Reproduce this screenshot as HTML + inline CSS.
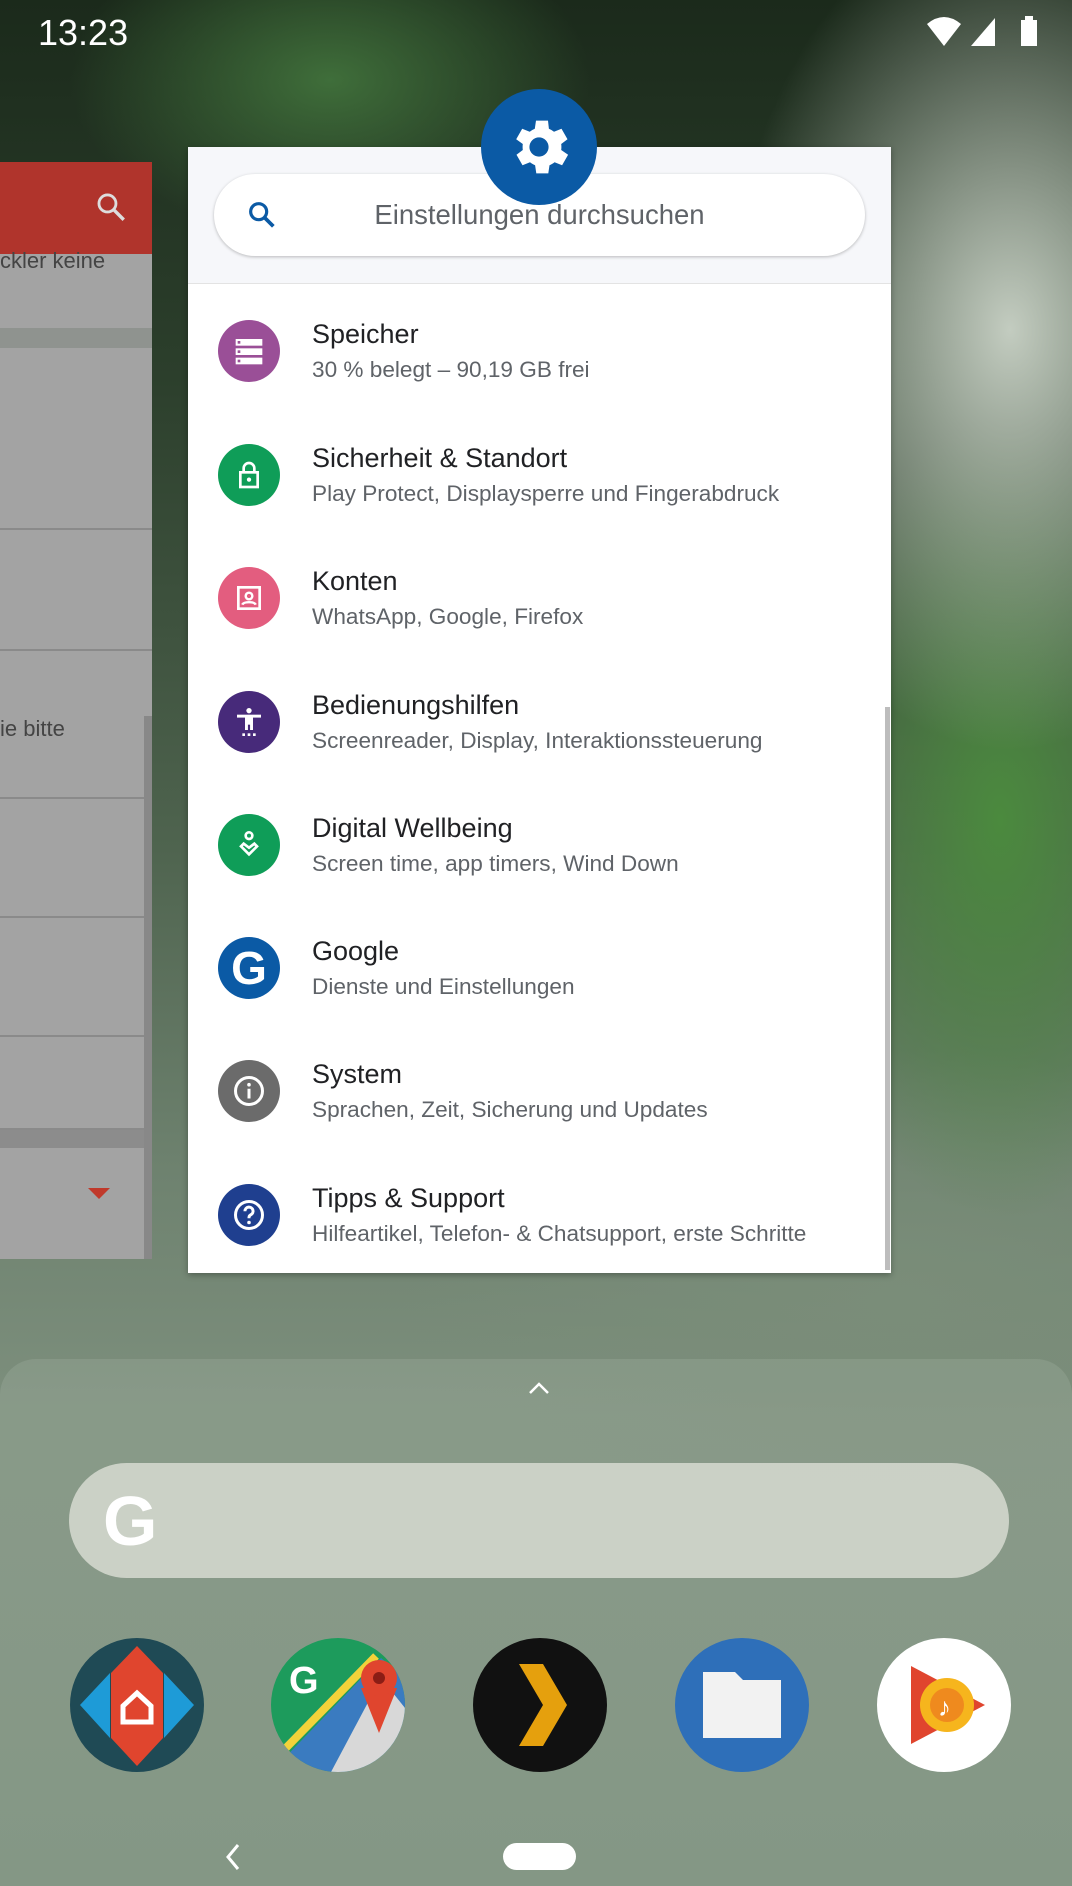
<!DOCTYPE html>
<html><head><meta charset="utf-8"><style>
*{margin:0;padding:0;box-sizing:border-box}
body{width:1072px;height:1886px;overflow:hidden;position:relative;font-family:"Liberation Sans",sans-serif;
background:
radial-gradient(ellipse 260px 160px at 330px 80px,#3f6e3a 0%,rgba(60,100,55,0) 100%),
radial-gradient(ellipse 280px 420px at 1010px 330px,#c3ccc0 0%,rgba(180,190,178,0) 100%),
radial-gradient(ellipse 200px 400px at 1000px 820px,#4b8a3e 0%,rgba(70,130,60,0) 100%),
radial-gradient(ellipse 500px 250px at 900px 1300px,#7a8d79 0%,rgba(120,140,120,0) 100%),
linear-gradient(180deg,#1b2a1b 0%,#2c3f2c 20%,#4f644f 45%,#6e826f 62%,#7d8f7d 75%,#788c79 100%);}
.abs{position:absolute}
.time{left:38px;top:12px;color:#fff;font-size:36px}
.left{left:0;top:162px;width:152px;height:1097px;background:#a3a3a3}
.lhead{left:0;top:162px;width:152px;height:92px;background:#b0342c}
.line{left:0;width:152px;height:2px;background:#8a8a8a}
.card{left:188px;top:147px;width:703px;height:1126px;background:#fff;box-shadow:0 2px 6px rgba(0,0,0,.3)}
.chead{left:188px;top:147px;width:703px;height:137px;background:#f6f7fa;border-bottom:1px solid #e3e3e3}
.pill{left:214px;top:174px;width:651px;height:82px;border-radius:41px;background:#fff;box-shadow:0 1px 3px rgba(0,0,0,.25)}
.ph{left:214px;top:199px;width:651px;text-align:center;font-size:27.5px;color:#5f6368}
.gear{left:481px;top:89px;width:116px;height:116px;border-radius:50%;background:#0b5aa5}
.ic{width:62px;height:62px;border-radius:50%;left:218px}
.t{left:312px;font-size:27px;color:#202124}
.s{left:312px;font-size:22.6px;color:#5f6368}
.dock{left:0;top:1359px;width:1072px;height:527px;border-radius:36px 36px 0 0;background:rgba(200,210,200,.16)}
.gbar{left:69px;top:1463px;width:940px;height:115px;border-radius:58px;background:rgba(220,222,214,.8)}
.app{width:134px;height:134px;border-radius:50%;top:1638px;overflow:hidden}
</style></head><body>
<div class="abs time">13:23</div>
<svg class="abs" style="left:925px;top:14px" width="120" height="36" viewBox="0 0 120 36">
<path d="M2 10 Q19 -4 36 10 L19 32 Z" fill="#fff"/>
<path d="M70 4 L70 32 L46 32 Z" fill="#fff"/>
<rect x="96" y="6" width="16" height="26" fill="#fff"/><rect x="100" y="2" width="8" height="5" fill="#fff"/>
</svg>
<div class="abs left"></div>
<div class="abs lhead"></div>
<svg class="abs" style="left:94px;top:190px" width="34" height="34" viewBox="0 0 24 24"><circle cx="9.5" cy="9.5" r="6" fill="none" stroke="#ddd" stroke-width="2"/><path d="M14 14 L21 21" stroke="#ddd" stroke-width="2.4"/></svg>
<div class="abs" style="left:0;top:248px;font-size:22px;color:#444">ckler keine</div>
<div class="abs" style="left:0;top:328px;width:152px;height:20px;background:#8f938f"></div>
<div class="abs line" style="top:528px"></div>
<div class="abs line" style="top:649px"></div>
<div class="abs" style="left:0;top:716px;font-size:22px;color:#444">ie bitte</div>
<div class="abs line" style="top:797px"></div>
<div class="abs line" style="top:916px"></div>
<div class="abs line" style="top:1035px"></div>
<div class="abs line" style="top:1128px"></div>
<div class="abs" style="left:0;top:1130px;width:152px;height:18px;background:#8c8c8c"></div>
<div class="abs" style="left:88px;top:1188px;width:0;height:0;border-left:11px solid transparent;border-right:11px solid transparent;border-top:11px solid #c0392b"></div>
<div class="abs" style="left:144px;top:716px;width:8px;height:543px;background:#888"></div>

<div class="abs card"></div>
<div class="abs chead"></div>
<div class="abs pill"></div>
<svg class="abs" style="left:246px;top:199px" width="32" height="32" viewBox="0 0 24 24"><circle cx="9.5" cy="9.5" r="6" fill="none" stroke="#0b5aa5" stroke-width="2.4"/><path d="M14 14 L20.5 20.5" stroke="#0b5aa5" stroke-width="2.8"/></svg>
<div class="abs ph">Einstellungen durchsuchen</div>
<div class="abs gear"></div>
<svg class="abs" style="left:503px;top:111px" width="72" height="72" viewBox="0 0 24 24"><path fill="#fff" d="M19.4 13a7.5 7.5 0 0 0 0-2l2.1-1.6-2-3.5-2.5 1a7.3 7.3 0 0 0-1.7-1L15 3.2h-4l-.4 2.7a7.3 7.3 0 0 0-1.7 1l-2.5-1-2 3.5L6.6 11a7.5 7.5 0 0 0 0 2l-2.1 1.6 2 3.5 2.5-1c.5.4 1.1.7 1.7 1l.4 2.7h4l.4-2.7c.6-.3 1.2-.6 1.7-1l2.5 1 2-3.5zM12 15.2a3.2 3.2 0 1 1 0-6.4 3.2 3.2 0 0 1 0 6.4z"/></svg>
<div class="abs" style="left:885px;top:707px;width:5px;height:563px;background:#bdbdbd"></div>

<div class="abs ic" style="top:320px;background:#9a4f97"></div>
<svg class="abs" style="left:233px;top:335px" width="32" height="32" viewBox="0 0 24 24" fill="#fff"><rect x="2" y="3" width="20" height="5"/><rect x="2" y="10" width="20" height="5"/><rect x="2" y="17" width="20" height="5"/><rect x="3.5" y="4.5" width="2" height="2" fill="#9a4f97"/><rect x="3.5" y="11.5" width="2" height="2" fill="#9a4f97"/><rect x="3.5" y="18.5" width="2" height="2" fill="#9a4f97"/></svg>
<div class="abs t" style="top:319px">Speicher</div>
<div class="abs s" style="top:357px">30 % belegt – 90,19 GB frei</div>

<div class="abs ic" style="top:444px;background:#0f9d58"></div>
<svg class="abs" style="left:233px;top:459px" width="32" height="32" viewBox="0 0 24 24"><path d="M8 10V7a4 4 0 0 1 8 0v3" fill="none" stroke="#fff" stroke-width="2"/><rect x="5.5" y="10" width="13" height="11" fill="none" stroke="#fff" stroke-width="2"/><circle cx="12" cy="15.5" r="1.6" fill="#fff"/></svg>
<div class="abs t" style="top:443px">Sicherheit &amp; Standort</div>
<div class="abs s" style="top:481px">Play Protect, Displaysperre und Fingerabdruck</div>

<div class="abs ic" style="top:567px;background:#e35d7f"></div>
<svg class="abs" style="left:233px;top:582px" width="32" height="32" viewBox="0 0 24 24"><rect x="4" y="4" width="16" height="16" fill="none" stroke="#fff" stroke-width="2"/><circle cx="12" cy="10.5" r="2.5" fill="none" stroke="#fff" stroke-width="1.8"/><path d="M7 17c1-2.5 9-2.5 10 0" fill="none" stroke="#fff" stroke-width="1.8"/></svg>
<div class="abs t" style="top:566px">Konten</div>
<div class="abs s" style="top:604px">WhatsApp, Google, Firefox</div>

<div class="abs ic" style="top:691px;background:#472a7a"></div>
<svg class="abs" style="left:233px;top:706px" width="32" height="32" viewBox="0 0 24 24" fill="#fff"><circle cx="12" cy="3.5" r="2"/><rect x="3" y="6.5" width="18" height="2.2"/><rect x="9" y="8" width="6" height="6"/><rect x="9" y="13" width="2.2" height="5"/><rect x="12.8" y="13" width="2.2" height="5"/><rect x="7" y="20.5" width="2" height="2"/><rect x="11" y="20.5" width="2" height="2"/><rect x="15" y="20.5" width="2" height="2"/></svg>
<div class="abs t" style="top:690px">Bedienungshilfen</div>
<div class="abs s" style="top:728px">Screenreader, Display, Interaktionssteuerung</div>

<div class="abs ic" style="top:814px;background:#0f9d58"></div>
<svg class="abs" style="left:233px;top:829px" width="32" height="32" viewBox="0 0 24 24" fill="none" stroke="#fff" stroke-width="2"><circle cx="12" cy="5" r="2.5"/><path d="M6 13l6 6 6-6-2-2-4 3-4-3z"/></svg>
<div class="abs t" style="top:813px">Digital Wellbeing</div>
<div class="abs s" style="top:851px">Screen time, app timers, Wind Down</div>

<div class="abs ic" style="top:937px;background:#0b5aa5"></div>
<div class="abs" style="left:218px;top:937px;width:62px;height:62px;text-align:center;line-height:62px;font-size:46px;font-weight:bold;color:#fff">G</div>
<div class="abs t" style="top:936px">Google</div>
<div class="abs s" style="top:974px">Dienste und Einstellungen</div>

<div class="abs ic" style="top:1060px;background:#6b6b6b"></div>
<svg class="abs" style="left:231px;top:1073px" width="36" height="36" viewBox="0 0 24 24"><circle cx="12" cy="12" r="9" fill="none" stroke="#fff" stroke-width="2"/><rect x="11" y="10.5" width="2" height="6.5" fill="#fff"/><circle cx="12" cy="7.8" r="1.2" fill="#fff"/></svg>
<div class="abs t" style="top:1059px">System</div>
<div class="abs s" style="top:1097px">Sprachen, Zeit, Sicherung und Updates</div>

<div class="abs ic" style="top:1184px;background:#1f3f8f"></div>
<svg class="abs" style="left:231px;top:1197px" width="36" height="36" viewBox="0 0 24 24"><circle cx="12" cy="12" r="9" fill="none" stroke="#fff" stroke-width="2"/><path d="M9.3 9.5a2.7 2.7 0 1 1 3.8 2.4c-.8.4-1.1.9-1.1 1.8v.5" fill="none" stroke="#fff" stroke-width="2"/><circle cx="12" cy="17" r="1.2" fill="#fff"/></svg>
<div class="abs t" style="top:1183px">Tipps &amp; Support</div>
<div class="abs s" style="top:1221px">Hilfeartikel, Telefon- &amp; Chatsupport, erste Schritte</div>

<div class="abs dock"></div>
<svg class="abs" style="left:528px;top:1381px" width="22" height="14" viewBox="0 0 22 14"><path d="M2 12 L11 3 L20 12" fill="none" stroke="#fff" stroke-width="2.5"/></svg>
<div class="abs gbar"></div>
<div class="abs" style="left:103px;top:1486px;font-size:70px;font-weight:bold;color:#fff;line-height:70px">G</div>

<div class="abs app" style="left:70px;background:#1f4a55">
<svg width="134" height="134" viewBox="0 0 134 134"><path d="M10 67 L40 35 L40 100Z M124 67 L94 35 L94 100Z" fill="#1e9bd7"/><path d="M67 8 L93 35 V100 L67 128 L41 100 V35Z" fill="#e0452e"/><path d="M53 68 L67 55 L81 68 V84 H53Z" fill="none" stroke="#fff" stroke-width="5"/></svg></div>
<div class="abs app" style="left:271px;background:#1d9b5c">
<svg width="134" height="134" viewBox="0 0 134 134"><path d="M0 134 L110 20 L134 40 V134Z" fill="#3a7bc0"/><path d="M60 134 L110 40 L134 70 V134Z" fill="#d8d8d8"/><path d="M10 115 L105 18" stroke="#f2d23a" stroke-width="8"/><path d="M90 50 L108 95 L126 50Z" fill="#e0452e"/><circle cx="108" cy="40" r="18" fill="#e0452e"/><circle cx="108" cy="40" r="6" fill="#8b1d15"/><text x="18" y="55" font-family="Liberation Sans" font-weight="bold" font-size="38" fill="#fff">G</text></svg></div>
<div class="abs app" style="left:473px;background:#111">
<svg width="134" height="134" viewBox="0 0 134 134"><path d="M46 26 H70 L94 67 L70 108 H46 L70 67Z" fill="#e5a00d"/></svg></div>
<div class="abs app" style="left:675px;background:#2e6fb9">
<svg width="134" height="134" viewBox="0 0 134 134"><path d="M28 34 H60 L68 42 H106 V100 H28Z" fill="#f2f2f2"/></svg></div>
<div class="abs app" style="left:877px;background:#fff">
<svg width="134" height="134" viewBox="0 0 134 134"><path d="M34 28 L108 67 L34 106Z" fill="#e0452e"/><circle cx="70" cy="67" r="27" fill="#f6b51d"/><circle cx="70" cy="67" r="17" fill="#ef8a1e"/><text x="61" y="78" font-size="26" fill="#fff">♪</text></svg></div>

<svg class="abs" style="left:222px;top:1842px" width="22" height="30" viewBox="0 0 22 30"><path d="M16 3 L6 15 L16 27" fill="none" stroke="#fff" stroke-width="3"/></svg>
<div class="abs" style="left:503px;top:1843px;width:73px;height:27px;border-radius:14px;background:#fff"></div>
</body></html>
